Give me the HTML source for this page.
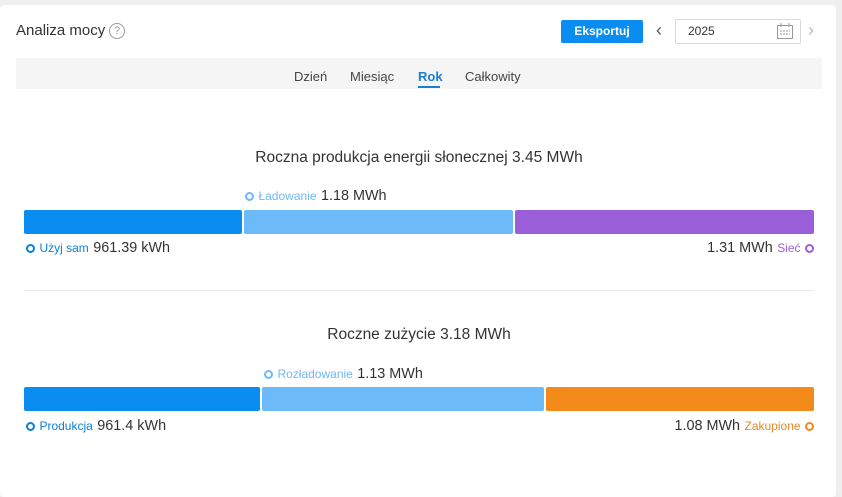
<!DOCTYPE html>
<html><head><meta charset="utf-8"><style>
body{margin:0;width:842px;height:497px;background:#efefef;font-family:"Liberation Sans",sans-serif;position:relative;overflow:hidden}
.card{position:absolute;left:0;top:5px;width:836px;height:492px;background:#fff;border-radius:4px}
.a{position:absolute;white-space:nowrap}
.bar{position:absolute;height:24px;border-radius:2px}
.dot{display:inline-block;width:5px;height:5px;border:2.5px solid;border-radius:50%;vertical-align:-1px}
.lab{font-size:12px}
.val{font-size:14.4px;color:#333}
</style></head><body>
<div class="card"></div>
<div class="a" style="left:16px;top:22px;font-size:15px;color:#333">Analiza mocy</div>
<div class="a" style="left:109px;top:23px;width:14px;height:14px;border:1px solid #999;border-radius:50%;font-size:11px;color:#999;text-align:center;line-height:14px">?</div>
<div class="a" style="left:561px;top:20px;width:82px;height:23px;background:#0a8cf0;border-radius:2px;color:#fff;font-size:12px;font-weight:bold;text-align:center;line-height:23px">Eksportuj</div>
<div class="a" style="left:656px;top:20px;font-size:18px;color:#555">‹</div>
<div class="a" style="left:675px;top:19px;width:124px;height:23px;border:1px solid #d9d9d9;border-radius:2px;font-size:12px;color:#333;line-height:23px;text-indent:12px">2025</div>
<svg class="a" style="left:776px;top:22px" width="18" height="18" viewBox="0 0 18 18" fill="none" stroke="#999" stroke-width="1"><rect x="1.5" y="3.5" width="15" height="13"/><line x1="5" y1="1" x2="5" y2="5"/><line x1="13" y1="1" x2="13" y2="5"/><line x1="4" y1="9" x2="14" y2="9" stroke-dasharray="2 1"/><line x1="4" y1="12" x2="14" y2="12" stroke-dasharray="2 1"/></svg>
<div class="a" style="left:808px;top:20px;font-size:18px;color:#bbb">›</div>
<div class="a" style="left:16px;top:58px;width:806px;height:31px;background:#f5f5f5"></div>
<div class="a" style="left:294px;top:69px;font-size:13px;color:#444">Dzień</div>
<div class="a" style="left:350px;top:69px;font-size:13px;color:#444">Miesiąc</div>
<div class="a" style="left:418px;top:69px;font-size:13px;color:#1a7fd4;font-weight:bold">Rok</div>
<div class="a" style="left:418px;top:86px;width:22px;height:2px;background:#1a7fd4"></div>
<div class="a" style="left:465px;top:69px;font-size:13px;color:#444">Całkowity</div>

<div class="a" style="left:0;width:838px;text-align:center;top:149px;font-size:15.5px;color:#333">Roczna produkcja energii słonecznej 3.45 MWh</div>
<div class="a" style="left:245px;top:187px"><span class="dot" style="border-color:#6fb8f5"></span> <span class="lab" style="color:#6fb8f5">Ładowanie</span> <span class="val">1.18 MWh</span></div>
<div class="bar" style="left:24px;top:210px;width:218px;background:#0a8cf0"></div>
<div class="bar" style="left:244px;top:210px;width:269px;background:#6cbaf8"></div>
<div class="bar" style="left:515px;top:210px;width:299px;background:#9b5ed9"></div>
<div class="a" style="left:26px;top:239px"><span class="dot" style="border-color:#0a7fd8"></span> <span class="lab" style="color:#0a7fd8">Użyj sam</span> <span class="val">961.39 kWh</span></div>
<div class="a" style="right:28px;top:239px"><span class="val">1.31 MWh</span> <span class="lab" style="color:#9b5ed9">Sieć</span> <span class="dot" style="border-color:#9b5ed9"></span></div>
<div class="a" style="left:24px;top:290px;width:790px;height:1px;background:#e8e8e8"></div>

<div class="a" style="left:0;width:838px;text-align:center;top:326px;font-size:15.5px;color:#333">Roczne zużycie 3.18 MWh</div>
<div class="a" style="left:264px;top:365px"><span class="dot" style="border-color:#6fb8f5"></span> <span class="lab" style="color:#6fb8f5">Rozładowanie</span> <span class="val">1.13 MWh</span></div>
<div class="bar" style="left:24px;top:387px;width:236px;background:#0a8cf0"></div>
<div class="bar" style="left:262px;top:387px;width:282px;background:#6cbaf8"></div>
<div class="bar" style="left:546px;top:387px;width:268px;background:#f38a1a"></div>
<div class="a" style="left:26px;top:417px"><span class="dot" style="border-color:#0a7fd8"></span> <span class="lab" style="color:#0a7fd8">Produkcja</span> <span class="val">961.4 kWh</span></div>
<div class="a" style="right:28px;top:417px"><span class="val">1.08 MWh</span> <span class="lab" style="color:#e88a2a">Zakupione</span> <span class="dot" style="border-color:#f38a1a"></span></div>
</body></html>
